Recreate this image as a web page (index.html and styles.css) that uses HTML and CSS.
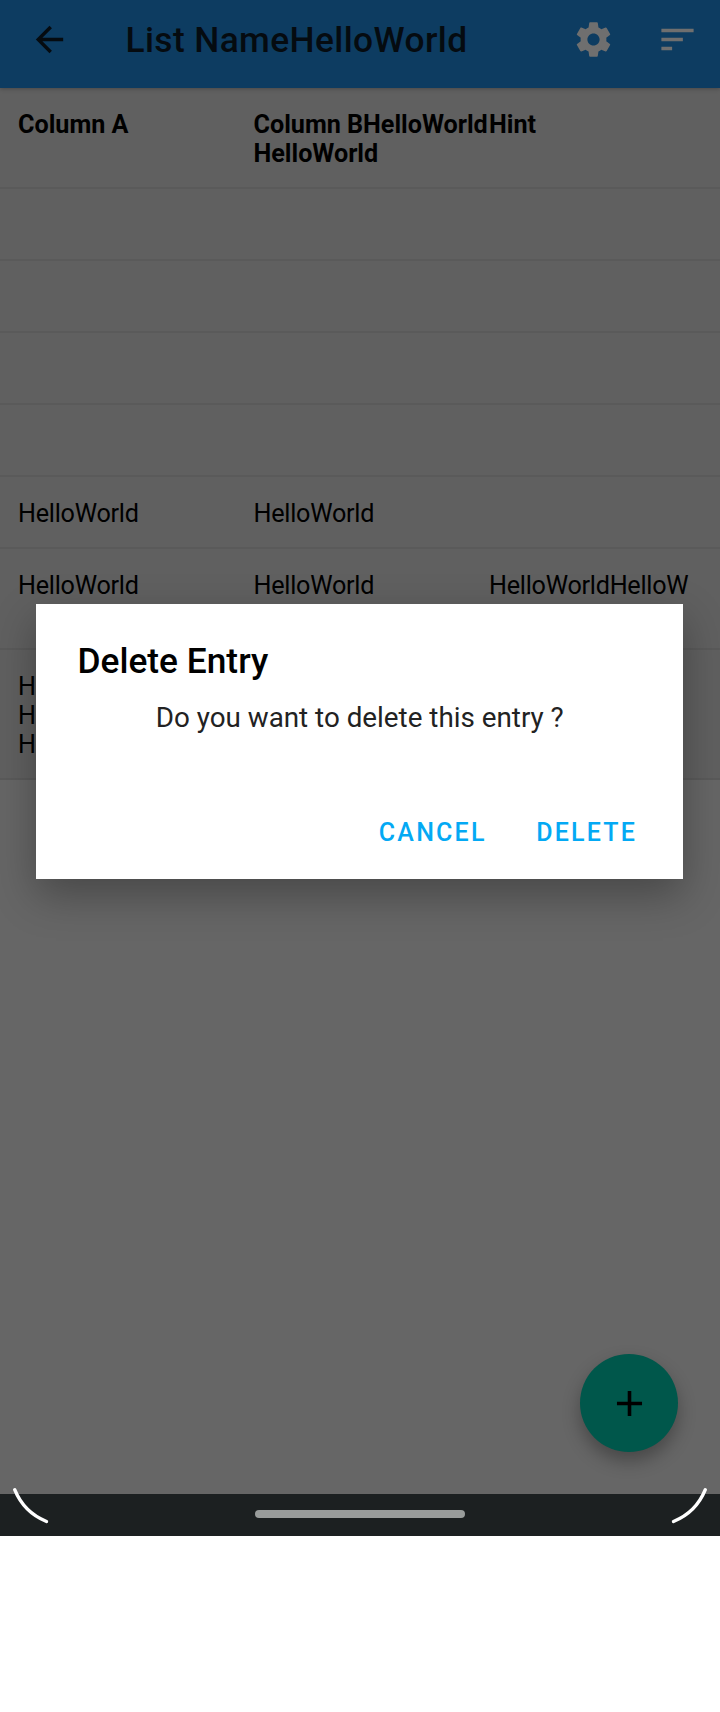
FILE: index.html
```html
<!DOCTYPE html>
<html lang="en">
<head>
<meta charset="utf-8">
<title>List</title>
<link rel="stylesheet" href="styles.css">
</head>
<body>
<div class="screen">
  <header class="appbar">
    <svg class="icon back" viewBox="0 0 24 24"><path d="M20 11H7.83l5.59-5.59L12 4l-8 8 8 8 1.41-1.41L7.83 13H20v-2z"/></svg>
    <h1 class="appbar-title">List NameHelloWorld</h1>
    <svg class="icon settings" viewBox="0 0 24 24"><path d="M19.14 12.94c.04-.3.06-.61.06-.94 0-.32-.02-.64-.07-.94l2.03-1.58a.49.49 0 0 0 .12-.61l-1.92-3.32a.488.488 0 0 0-.59-.22l-2.39.96c-.5-.38-1.03-.7-1.62-.94l-.36-2.54a.484.484 0 0 0-.48-.41h-3.84c-.24 0-.43.17-.47.41l-.36 2.54c-.59.24-1.13.57-1.62.94l-2.39-.96c-.22-.08-.47 0-.59.22L2.74 8.87c-.12.21-.08.47.12.61l2.03 1.58c-.05.3-.09.63-.09.94s.02.64.07.94l-2.03 1.58a.49.49 0 0 0-.12.61l1.92 3.32c.12.22.37.29.59.22l2.39-.96c.5.38 1.03.7 1.62.94l.36 2.54c.05.24.24.41.48.41h3.84c.24 0 .44-.17.47-.41l.36-2.54c.59-.24 1.13-.56 1.62-.94l2.39.96c.22.08.47 0 .59-.22l1.92-3.32c.12-.22.07-.47-.12-.61l-2.01-1.58zM12 15.4c-1.88 0-3.4-1.52-3.4-3.4s1.52-3.4 3.4-3.4 3.4 1.52 3.4 3.4-1.52 3.4-3.4 3.4z"/></svg>
    <svg class="icon sort" viewBox="0 0 24 24"><path d="M3 18h6v-2H3v2zM3 6v2h18V6H3zm0 7h12v-2H3v2z"/></svg>
  </header>
  <main class="content">
    <div class="row head"><div>Column A</div><div>Column BHelloWorld<br>HelloWorld</div><div>Hint</div></div>
    <div class="row"></div>
    <div class="row"></div>
    <div class="row"></div>
    <div class="row"></div>
    <div class="row"><div>HelloWorld</div><div>HelloWorld</div></div>
    <div class="row"><div>HelloWorld</div><div>HelloWorld</div><div>HelloWorldHelloW<br>orld</div></div>
    <div class="row"><div>HelloWorld<br>HelloWorld<br>HelloWorld</div></div>
  </main>
  <div class="fab"><svg class="icon" viewBox="0 0 24 24"><path d="M19 13h-6v6h-2v-6H5v-2h6V5h2v6h6v2z"/></svg></div>
  <nav class="navbar"><div class="pill"></div></nav>
  <svg class="corner left" viewBox="0 0 40 40"><path d="M2.7 2.7Q12 25.5 34.5 34.5"/></svg>
  <svg class="corner right" viewBox="0 0 40 40"><path d="M2.7 2.7Q12 25.5 34.5 34.5"/></svg>
  <section class="dialog">
    <h2 class="dialog-title">Delete Entry</h2>
    <p class="message">Do you want to delete this entry ?</p>
    <div class="actions"><span>CANCEL</span><span>DELETE</span></div>
  </section>
</div>
</body>
</html>
```
FILE: styles.css
```css
* { box-sizing: border-box; }
body { margin: 0; background: #fff; font-family: Roboto, sans-serif; }
h1, h2, p { margin: 0; }
.screen { position: relative; display: flex; flex-direction: column; width: 720px; height: 1536px; background: #666; overflow: hidden; }
.appbar { position: relative; z-index: 1; display: flex; align-items: center; flex: none; height: 88px; padding: 0 21px 10px 28.5px; background: #0d3c61; box-shadow: 0 1px 4px rgba(0,0,0,.25); }
.icon { display: block; flex: none; width: 43px; height: 43px; fill: #000; }
.back { width: 41px; height: 41px; fill: #050b10; }
.appbar-title { flex: 1; padding-left: 56px; padding-top: 1px; color: #050b10; font-size: 35.3px; line-height: 42px; font-weight: 500; letter-spacing: .4px; white-space: nowrap; }
.settings, .sort { fill: #6f6f6f; }
.sort { margin-left: 41px; }
.content { flex: 1; }
.row { display: grid; grid-template-columns: repeat(3, 235.5px); min-height: 72px; padding: 22px 0 19px 18px; background: #606060; border-bottom: 2px solid #5a5a5a; color: #000; font-size: 25.2px; line-height: 29px; letter-spacing: -.25px; }
.head { font-weight: 700; letter-spacing: -.02px; }
.fab { position: absolute; left: 580px; top: 1354px; display: flex; align-items: center; justify-content: center; width: 98px; height: 98px; border-radius: 50%; background: #00574b; box-shadow: 0 9px 18px rgba(0,0,0,.3); }
.navbar { display: flex; justify-content: center; flex: none; height: 42px; padding-top: 16px; background: #1c2021; }
.pill { width: 210px; height: 8px; border-radius: 4px; background: #999c9b; }
.corner { position: absolute; top: 1487px; width: 40px; height: 40px; fill: none; stroke: #fff; stroke-width: 3.4; stroke-linecap: round; }
.left { left: 12px; }
.right { right: 12px; transform: scaleX(-1); }
.dialog { position: absolute; left: 36px; top: 604px; width: 647px; height: 275px; padding: 36px 46px 0 41.5px; background: #fff; box-shadow: 0 16px 40px rgba(0,0,0,.3); }
.dialog-title { color: #000; font-size: 35.3px; line-height: 42px; font-weight: 500; }
.message { margin: 19px -5px 0 0; color: #222; font-size: 27.8px; line-height: 34px; text-align: center; }
.actions { display: flex; justify-content: flex-end; gap: 49.5px; margin-top: 83px; color: #03a9f4; font-size: 25px; line-height: 30px; font-weight: 500; letter-spacing: 2.2px; }
```
